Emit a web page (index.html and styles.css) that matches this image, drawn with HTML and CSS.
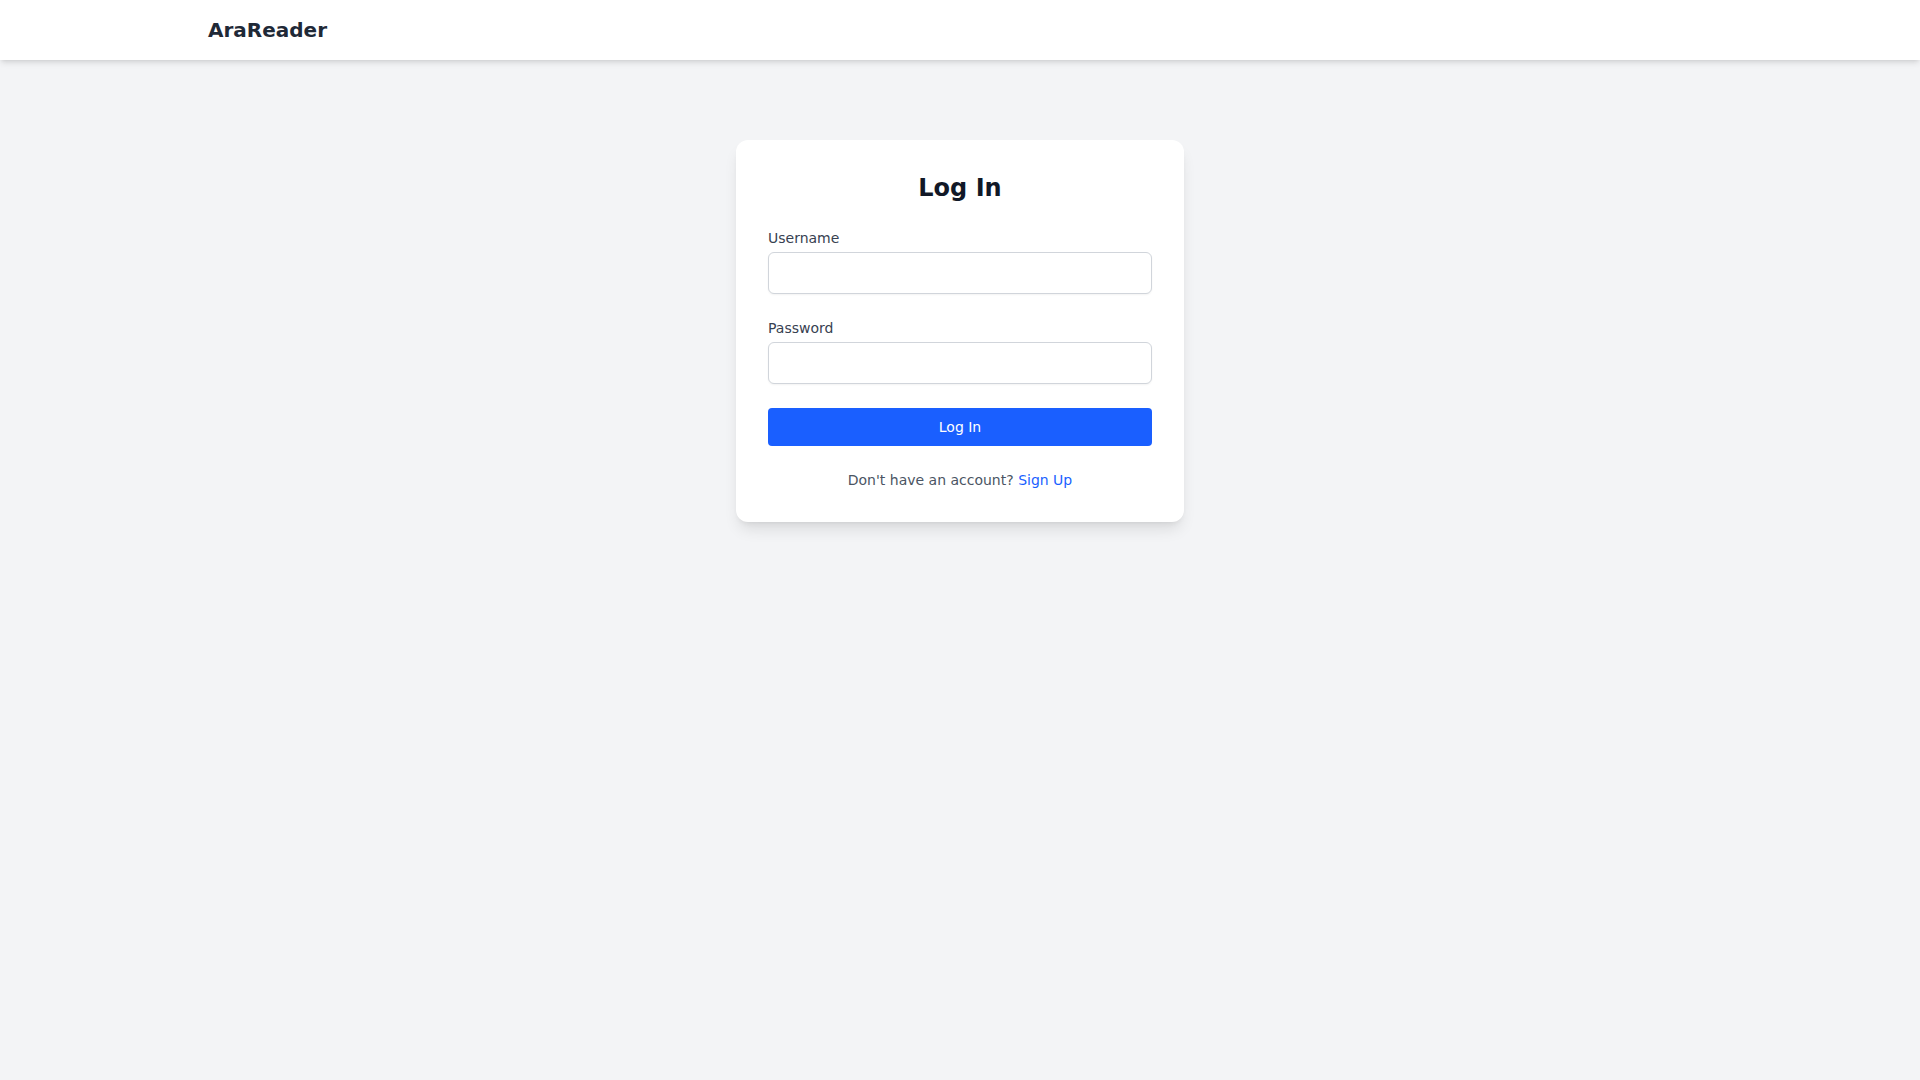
FILE: index.html
```html
<!DOCTYPE html>
<html lang="en">
<head>
<meta charset="utf-8">
<title>AraReader - Log In</title>
<link rel="stylesheet" href="styles.css">
</head>
<body>
<header class="topbar">
  <div class="container">
    <span class="brand">AraReader</span>
  </div>
</header>
<main class="main">
  <div class="card">
    <h1 class="card-title">Log In</h1>
    <form class="form">
      <div class="field">
        <label class="label" for="username">Username</label>
        <input class="input" id="username" type="text">
      </div>
      <div class="field">
        <label class="label" for="password">Password</label>
        <input class="input" id="password" type="password">
      </div>
      <button class="btn" type="button">Log In</button>
    </form>
    <p class="footnote">Don't have an account? <a class="link" href="#">Sign Up</a></p>
  </div>
</main>
</body>
</html>
```
FILE: styles.css
```css
* { box-sizing: border-box; }
html, body { margin: 0; padding: 0; }
body {
  background: #f3f4f6;
  font-family: "DejaVu Sans", sans-serif;
  color: #111827;
  min-height: 100vh;
}
.topbar {
  position: relative;
  background: #ffffff;
  box-shadow: 0 4px 6px -1px rgba(0,0,0,0.1), 0 2px 4px -2px rgba(0,0,0,0.1);
}
.container {
  max-width: 1536px;
  margin: 0 auto;
  padding: 16px;
}
.brand {
  display: block;
  font-size: 20px;
  line-height: 28px;
  font-weight: 700;
  color: #1f2937;
}
.main {
  display: flex;
  justify-content: center;
  padding-top: 80px;
}
.card {
  width: 448px;
  background: #ffffff;
  border-radius: 12px;
  box-shadow: 0 10px 15px -3px rgba(0,0,0,0.1), 0 4px 6px -4px rgba(0,0,0,0.1);
  padding: 32px;
}
.card-title {
  margin: 0 0 24px;
  text-align: center;
  font-size: 24px;
  line-height: 32px;
  font-weight: 700;
  color: #111827;
}
.form { margin: 0; }
.field { margin-bottom: 24px; }
.label {
  display: block;
  font-size: 14px;
  line-height: 20px;
  color: #374151;
  margin-bottom: 4px;
}
.input {
  display: block;
  width: 100%;
  height: 42px;
  padding: 8px 12px;
  font-family: inherit;
  font-size: 16px;
  line-height: 24px;
  border: 1px solid #d1d5db;
  border-radius: 6px;
  background: #ffffff;
  box-shadow: 0 1px 2px 0 rgba(0,0,0,0.05);
  outline: none;
}
.btn {
  display: block;
  width: 100%;
  height: 38px;
  padding: 0 16px;
  border: none;
  border-radius: 4px;
  background: #1a5fff;
  color: #ffffff;
  font-family: inherit;
  font-size: 14px;
  line-height: 20px;
  cursor: pointer;
}
.footnote {
  margin: 24px 0 0;
  text-align: center;
  font-size: 14px;
  line-height: 20px;
  color: #4b5563;
}
.link {
  color: #1a5fff;
  text-decoration: none;
}
```
